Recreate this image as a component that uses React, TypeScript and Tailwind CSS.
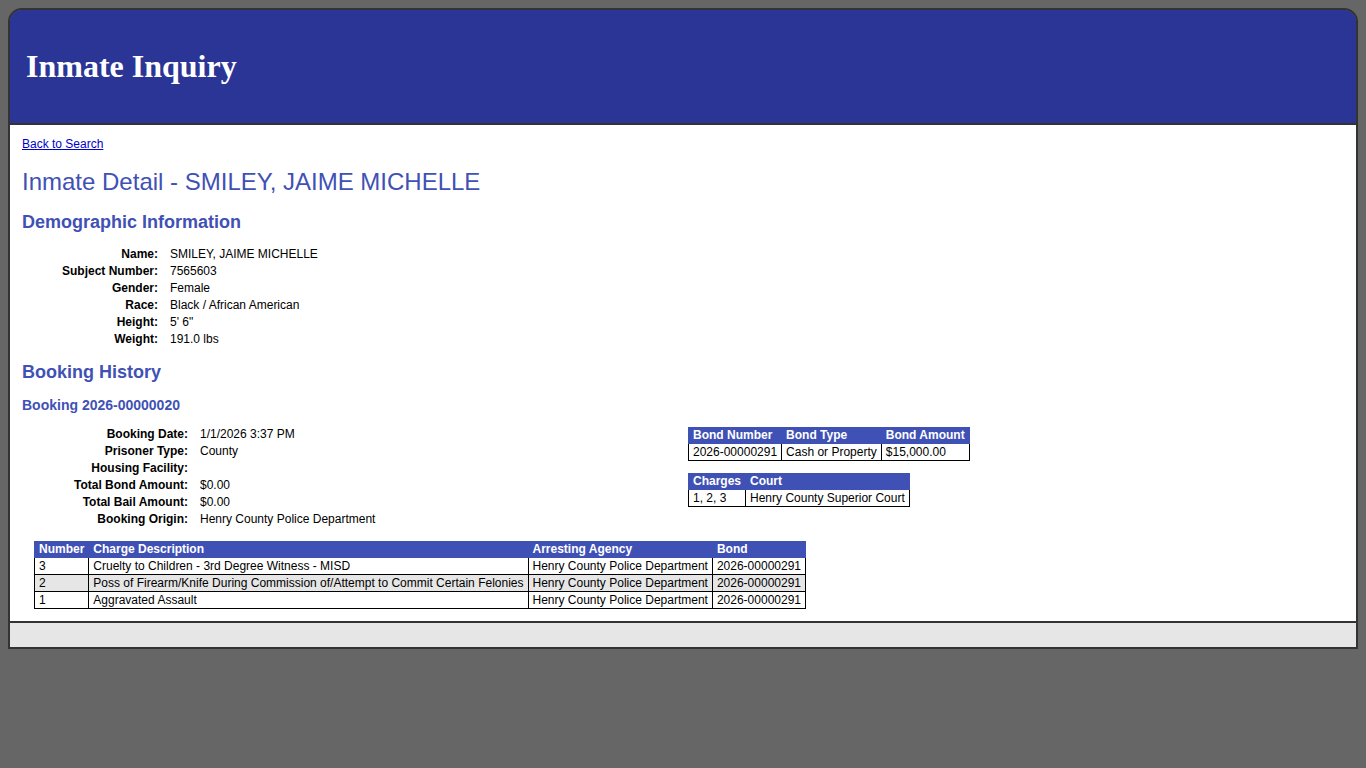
import React from "react";

const demographics: [string, string][] = [
  ["Name:", "SMILEY, JAIME MICHELLE"],
  ["Subject Number:", "7565603"],
  ["Gender:", "Female"],
  ["Race:", "Black / African American"],
  ["Height:", "5' 6\""],
  ["Weight:", "191.0 lbs"],
];

const booking: [string, string][] = [
  ["Booking Date:", "1/1/2026 3:37 PM"],
  ["Prisoner Type:", "County"],
  ["Housing Facility:", ""],
  ["Total Bond Amount:", "$0.00"],
  ["Total Bail Amount:", "$0.00"],
  ["Booking Origin:", "Henry County Police Department"],
];

const charges = [
  { num: "3", desc: "Cruelty to Children - 3rd Degree Witness - MISD", agency: "Henry County Police Department", bond: "2026-00000291" },
  { num: "2", desc: "Poss of Firearm/Knife During Commission of/Attempt to Commit Certain Felonies", agency: "Henry County Police Department", bond: "2026-00000291" },
  { num: "1", desc: "Aggravated Assault", agency: "Henry County Police Department", bond: "2026-00000291" },
];

const th = "bg-[#3f51b5] text-white font-bold text-left px-[4px] leading-[15px] border border-[#3f51b5] whitespace-nowrap";
const td = "border border-black px-[4px] leading-[16px] whitespace-nowrap";

function InfoRows({ rows, labelWidth }: { rows: [string, string][]; labelWidth: string }) {
  return (
    <div className="flex flex-col">
      {rows.map(([label, value]) => (
        <div key={label} className="flex h-[17px] items-center gap-[12px]">
          <div className={`${labelWidth} text-right font-bold`}>{label}</div>
          <div>{value}</div>
        </div>
      ))}
    </div>
  );
}

export default function App() {
  return (
    <div className="min-h-screen bg-[#666666] pt-2" style={{ fontFamily: '"Liberation Sans", Arial, sans-serif' }}>
      <div className="mx-2 border-2 border-[#333333] rounded-t-[14px] overflow-hidden">
        <header className="h-[115px] bg-[#2b3595] flex items-center pl-[16px] pb-[2px] border-b-2 border-[#333333]">
          <h1 className="text-white font-bold text-[32px] leading-none" style={{ fontFamily: '"Liberation Serif", "Times New Roman", serif' }}>
            Inmate Inquiry
          </h1>
        </header>

        <main className="bg-white px-[12px] pt-[12px] pb-[12px] text-[12px] text-black">
          <a href="#" className="block w-fit leading-[14px] text-[#0000cc] underline">Back to Search</a>
          <h2 className="mt-[17px] text-[24px] leading-[28px] text-[#3f51b5]">Inmate Detail - SMILEY, JAIME MICHELLE</h2>

          <h3 className="mt-[15px] text-[18px] leading-[22px] font-bold text-[#3f51b5]">Demographic Information</h3>
          <div className="mt-[12px]">
            <InfoRows rows={demographics} labelWidth="w-[136px]" />
          </div>

          <h3 className="mt-[14px] text-[18px] leading-[22px] font-bold text-[#3f51b5]">Booking History</h3>
          <h4 className="mt-[14px] text-[14px] leading-[17px] font-bold text-[#3f51b5]">Booking 2026-00000020</h4>

          <div className="mt-[11px] flex items-start">
            <div className="w-[666px]">
              <InfoRows rows={booking} labelWidth="w-[166px]" />
            </div>
            <div className="mt-[2px] flex flex-col items-start gap-[12px]">
              <table className="border-collapse">
                <thead>
                  <tr>
                    <th className={th}>Bond Number</th>
                    <th className={th}>Bond Type</th>
                    <th className={th}>Bond Amount</th>
                  </tr>
                </thead>
                <tbody>
                  <tr>
                    <td className={td}>2026-00000291</td>
                    <td className={td}>Cash or Property</td>
                    <td className={td}>$15,000.00</td>
                  </tr>
                </tbody>
              </table>
              <table className="border-collapse">
                <thead>
                  <tr>
                    <th className={th}>Charges</th>
                    <th className={th}>Court</th>
                  </tr>
                </thead>
                <tbody>
                  <tr>
                    <td className={`${td} w-[57px]`}>1, 2, 3</td>
                    <td className={td}>Henry County Superior Court</td>
                  </tr>
                </tbody>
              </table>
            </div>
          </div>

          <table className="mt-[14px] ml-[12px] border-collapse">
            <thead>
              <tr>
                <th className={th}>Number</th>
                <th className={th}>Charge Description</th>
                <th className={th}>Arresting Agency</th>
                <th className={th}>Bond</th>
              </tr>
            </thead>
            <tbody>
              {charges.map((c, i) => (
                <tr key={c.num} className={i === 1 ? "bg-[#e6e6e6]" : ""}>
                  <td className={td}>{c.num}</td>
                  <td className={td}>{c.desc}</td>
                  <td className={td}>{c.agency}</td>
                  <td className={td}>{c.bond}</td>
                </tr>
              ))}
            </tbody>
          </table>
        </main>

        <footer className="h-[26px] bg-[#e6e6e6] border-t-2 border-[#333333]" />
      </div>
    </div>
  );
}
